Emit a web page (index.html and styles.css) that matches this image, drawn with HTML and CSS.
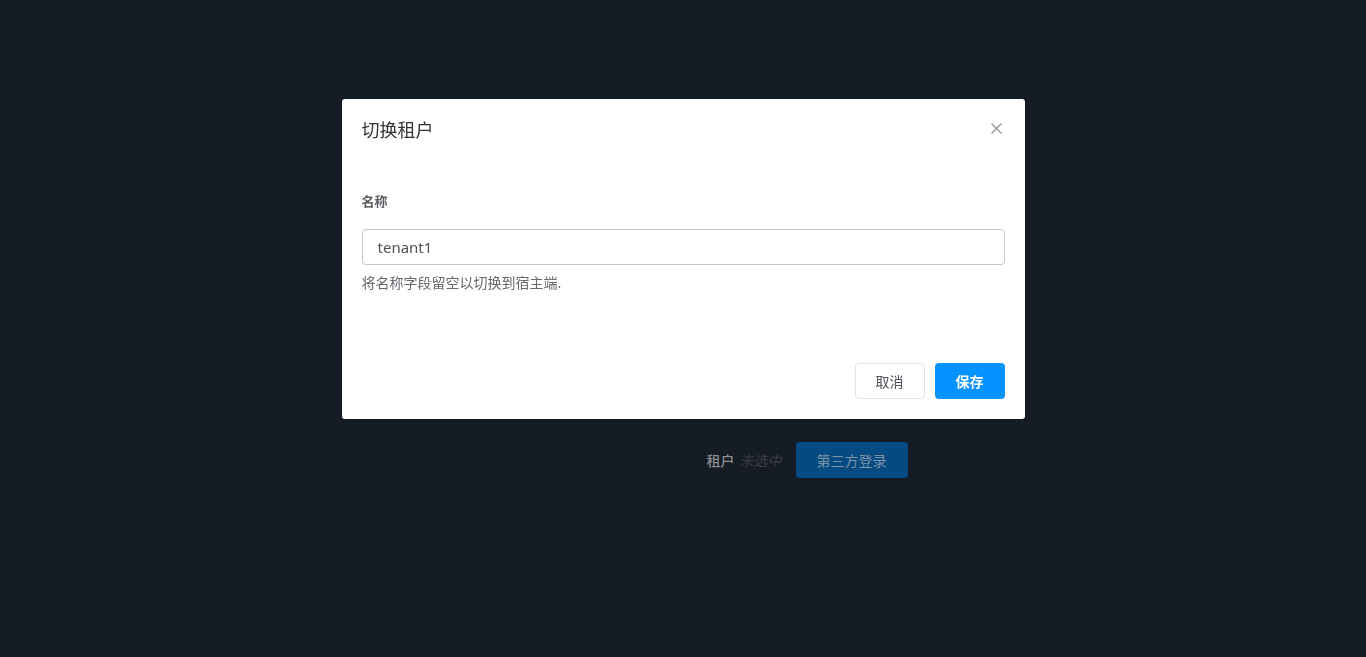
FILE: index.html
```html
<!DOCTYPE html>
<html lang="zh-CN">
<head>
    <meta charset="UTF-8">
    <meta name="viewport" content="width=device-width, initial-scale=1.0">
    <title>切换租户</title>
    <link rel="stylesheet" href="styles.css">
</head>
<body>
    <!-- Login page (behind backdrop) -->
    <div class="login-page">
        <div class="tenant-row">
            <span class="tenant-label">租户</span>
            <span class="tenant-value">未选中</span>
            <button class="external-button">第三方登录</button>
        </div>
    </div>

    <!-- Modal -->
    <div class="modal-backdrop">
        <div class="modal">
            <div class="modal-header">
                <h2 class="modal-title">切换租户</h2>
                <button class="modal-close" aria-label="关闭">
                    <svg width="11" height="11" viewBox="0 0 11 11">
                        <path d="M0.5 0.5 L10.5 10.5 M10.5 0.5 L0.5 10.5" stroke="#8b9099" stroke-width="1.2" fill="none"/>
                    </svg>
                </button>
            </div>
            <div class="modal-body">
                <label class="form-label">名称</label>
                <input class="form-control" type="text" value="tenant1">
                <p class="form-text">将名称字段留空以切换到宿主端.</p>
            </div>
            <div class="modal-footer">
                <button class="btn btn-cancel">取消</button>
                <button class="btn btn-save">保存</button>
            </div>
        </div>
    </div>
</body>
</html>
```

FILE: styles.css
```css
/* Reset */
* {
    margin: 0;
    padding: 0;
    box-sizing: border-box;
}

body {
    font-family: "Noto Sans", "Noto Sans CJK SC", sans-serif;
    background-color: #161c25;
    height: 657px;
    overflow: hidden;
}

/* Login page */
.login-page {
    display: flex;
    justify-content: center;
    padding-top: 442px;
    padding-left: 248px;
}

.tenant-row {
    display: flex;
    align-items: center;
}

.tenant-label {
    color: #8a8c90;
    font-size: 14px;
    font-weight: 500;
    margin-right: 5px;
}

.tenant-value {
    color: #3a3e45;
    font-size: 14px;
    font-style: italic;
    margin-right: 14px;
}

.external-button {
    width: 112px;
    height: 36px;
    background-color: #054a81;
    color: #7d93a8;
    border: none;
    border-radius: 3px;
    font-family: inherit;
    font-size: 14px;
}

/* Modal */
.modal-backdrop {
    position: fixed;
    inset: 0;
    display: flex;
    justify-content: center;
    align-items: flex-start;
    padding-top: 99px;
}

.modal {
    width: 683px;
    background-color: #fff;
    border-radius: 3px;
}

.modal-header {
    display: flex;
    justify-content: space-between;
    align-items: center;
    padding: 20px 20px 0 20px;
}

.modal-title {
    font-size: 18px;
    font-weight: 400;
    line-height: 22px;
    color: #333;
}

.modal-close {
    border: none;
    background: none;
    width: 11px;
    height: 11px;
    margin-right: 3px;
    margin-top: -4px;
    display: flex;
}

.modal-body {
    padding: 50px 20px 50px 20px;
}

.form-label {
    display: block;
    font-size: 13px;
    font-weight: 700;
    line-height: 20px;
    color: #5a5c62;
}

.form-control {
    display: block;
    width: 100%;
    height: 36px;
    margin-top: 18px;
    padding: 0 15px;
    border: 1px solid #c4c6cd;
    border-radius: 4px;
    font-family: inherit;
    font-size: 15px;
    color: #4f5258;
    outline: none;
}

.form-text {
    margin-top: 8px;
    font-size: 14px;
    line-height: 20px;
    color: #66686d;
}

.modal-footer {
    display: flex;
    justify-content: flex-end;
    gap: 10px;
    padding: 20px;
}

.btn {
    width: 70px;
    height: 36px;
    border-radius: 4px;
    font-family: inherit;
    font-size: 14px;
    cursor: pointer;
}

.btn-cancel {
    background-color: #fff;
    border: 1px solid #dfe2e8;
    color: #4f5258;
}

.btn-save {
    background-color: #0593ff;
    border: none;
    color: #fff;
    font-weight: 700;
}
```
